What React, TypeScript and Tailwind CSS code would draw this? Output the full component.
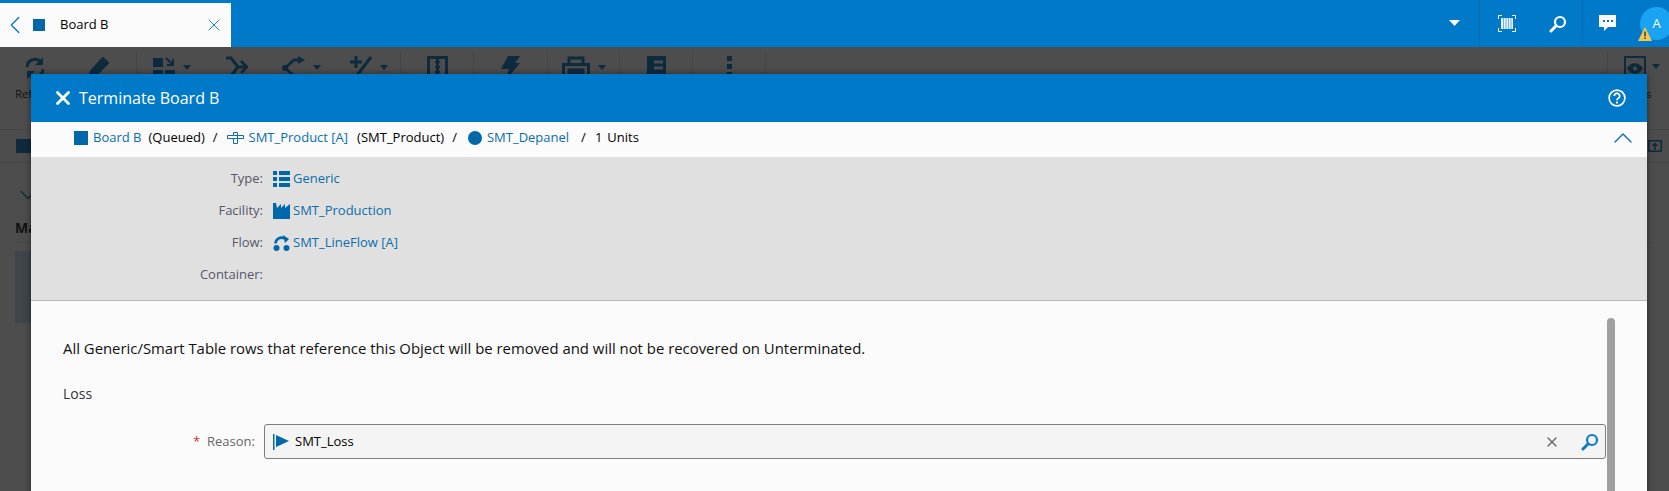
import type { ReactNode } from 'react'
import { ChevronLeft, ChevronUp, X } from 'lucide-react'

const linkCls = 'text-[#0a6eab]'
const INK = '#0e2a3d'

function SearchGlyph({ color, size }: { color: string; size: number }) {
  return (
    <svg width={size} height={size} viewBox="0 0 18 18" fill="none" stroke={color}>
      <circle cx="11" cy="7" r="5" strokeWidth="2.2" />
      <path d="M7.2 10.8 2 16" strokeWidth="3" strokeLinecap="round" />
    </svg>
  )
}

function Caret() {
  return (
    <svg width="8" height="5" viewBox="0 0 8 5" className="mb-[10px] ml-[8px]">
      <path d="M0 0h8L4 5z" fill={INK} />
    </svg>
  )
}

function ToolIcon({ w, children }: { w: number; children: ReactNode }) {
  return (
    <svg width={w} height="24" viewBox={`0 0 ${w} 24`} fill="none" stroke={INK} strokeWidth="3" className="shrink-0">
      {children}
    </svg>
  )
}

function Cell({ className, children }: { className: string; children: ReactNode }) {
  return <div className={`flex h-[64px] shrink-0 items-start border-r border-r-[#454545] ${className}`}>{children}</div>
}

function Toolbar() {
  return (
    <div className="flex h-[83px] items-start border-b border-b-[#454545] pt-[5px] text-[#111]">
      <Cell className="w-[137px] pt-[4px]">
        <div className="flex w-[70px] flex-col items-center">
          <ToolIcon w={18}>
            <path d="M1 11a8 8 0 0 1 14-5M17 13a8 8 0 0 1-14 5" />
            <path d="M17 1v8H9zM1 23v-8h8z" fill={INK} strokeWidth="0" />
          </ToolIcon>
          <span className="mt-[6px] text-[11px]">Refresh</span>
        </div>
        <div className="flex w-[58px] justify-center">
          <ToolIcon w={22}>
            <path d="M0 22l3-8L15 1l6 6L9 19z" fill={INK} strokeWidth="1" />
          </ToolIcon>
        </div>
      </Cell>
      <Cell className="w-[264px] gap-[35px] pl-[16px] pt-[4px]">
        <div className="flex items-end">
          <ToolIcon w={22}>
            <path d="M0 2h10v9H0zM0 14h10v10H0zM12 14h10v10H12z" fill={INK} strokeWidth="0" />
            <path d="M13 2l7 7M20 3v6h-6" strokeWidth="2" />
          </ToolIcon>
          <Caret />
        </div>
        <ToolIcon w={22}>
          <path d="M0 2h5l7 9h8M0 20h5l7-9" />
          <path d="M15 5l6 6-6 6" strokeWidth="2.500" />
        </ToolIcon>
        <div className="-ml-[1px] flex items-end">
          <ToolIcon w={23}>
            <path d="M3 12l9-8h6M3 12l9 8h6" />
            <circle cx="3" cy="12" r="3" fill={INK} strokeWidth="0" />
            <path d="M16 0l7 4-7 4z" fill={INK} strokeWidth="0" />
          </ToolIcon>
          <Caret />
        </div>
        <div className="-ml-[6px] flex items-end">
          <ToolIcon w={22}>
            <path d="M0 6h12M6 0v12M21 1L5 22M12 21h10" />
          </ToolIcon>
          <Caret />
        </div>
      </Cell>
      <Cell className="w-[73px] justify-center pt-[4px]">
        <ToolIcon w={21}>
          <path d="M1.500 1.500h18v21h-18zM10.500 1.500v21" />
          <path d="M8 6h5M8 11h5M8 16h5" strokeWidth="2" />
        </ToolIcon>
      </Cell>
      <Cell className="w-[74px] justify-center pt-[4px]">
        <ToolIcon w={19}>
          <path d="M7 0h12l-5 7h5L5 24l3-11H0z" fill={INK} strokeWidth="0" />
        </ToolIcon>
      </Cell>
      <Cell className="w-[72px] justify-center pt-[4px]">
        <div className="flex items-end">
          <ToolIcon w={28}>
            <path d="M7 7V2h14v5M1.500 8.500h25v13h-25zM7 14h14v3H7z" />
          </ToolIcon>
          <Caret />
        </div>
      </Cell>
      <Cell className="w-[73px] justify-center pt-[4px]">
        <ToolIcon w={19}>
          <path d="M0 0h19v24H0z" fill={INK} strokeWidth="0" />
          <path d="M7 6h9M7 12h9" stroke="#4d4d4d" strokeWidth="3" />
        </ToolIcon>
      </Cell>
      <Cell className="w-[73px] justify-center pt-[4px]">
        <ToolIcon w={5}>
          <path d="M0 0h5v5H0zM0 8h5v5H0zM0 16h5v5H0z" fill={INK} strokeWidth="0" />
        </ToolIcon>
      </Cell>
      <div className="ml-auto flex h-[64px] w-[62px] shrink-0 flex-col border-l border-l-[#454545] pr-[4px] pt-[4px]">
        <div className="flex justify-center pl-[10px]">
          <span className="flex h-[24px] w-[22px] items-center justify-center border-2 border-[#0e2a3d]">
            <svg width="16" height="11" viewBox="0 0 16 11">
              <path d="M0 5.500c4-7 12-7 16 0-4 7-12 7-16 0z" fill={INK} />
              <circle cx="8" cy="5.500" r="2" fill="#4d4d4d" />
            </svg>
          </span>
          <svg width="8" height="5" viewBox="0 0 8 5" className="ml-[6px] mt-[8px]">
            <path d="M0 0h8L4 5z" fill={INK} />
          </svg>
        </div>
        <span className="mt-[6px] text-center text-[11px]">Views</span>
      </div>
    </div>
  )
}

function DetailRow({ label, icon, value }: { label: string; icon?: ReactNode; value?: string }) {
  return (
    <div className="flex h-[32px] items-center">
      <span className="w-[232px] text-right text-[#56566a]">{label}</span>
      {value && (
        <span className="ml-[10px] flex items-center gap-[3px]">
          <span className="flex w-[17px] justify-center">{icon}</span>
          <span className={linkCls}>{value}</span>
        </span>
      )}
    </div>
  )
}

export default function App() {
  return (
    <div className="relative h-[491px] w-[1669px] overflow-hidden bg-[#4d4d4d] text-[13px] font-['Open_Sans',sans-serif]">
      {/* Top bar */}
      <div className="flex h-[47px] items-end bg-[#0079c9]">
        <div className="flex h-[44px] w-[231px] shrink-0 items-center bg-[#fbfbfb] pr-[7px]">
          <ChevronLeft size={30} strokeWidth={1.100} className="shrink-0 text-[#0079c9]" />
          <span className="ml-[3px] h-[12px] w-[12px] shrink-0 bg-[#0068a8]" />
          <span className="ml-[15px] flex-1 text-black">Board B</span>
          <X size={20} strokeWidth={1.100} className="text-[#0079c9]" />
        </div>
        <div className="flex h-[47px] flex-1 items-center justify-end">
          <svg width="12" height="8" viewBox="0 0 12 8" className="mr-[18px] -mt-[2px]"><path d="M0 1h11L5.500 7z" fill="#fff" /></svg>
          <div className="flex h-[47px] w-[103px] shrink-0 items-center gap-[33px] border-l border-l-[#0a6cad] pl-[18px]">
            <svg width="18" height="17" viewBox="0 0 18 17" fill="none" stroke="#fff">
              <path d="M.5 4V.5h3.500M14 .5h3.500V4M.5 13v3.500H4M14 16.500h3.500V13" strokeWidth="1" />
              <path d="M3 3h12v11H3z" fill="#e6f2fb" strokeWidth="0" />
              <path d="M5.500 3v11M8 3v11M10.500 3v11M13 3v11" stroke="#6fb1e0" strokeWidth="1" />
            </svg>
            <SearchGlyph color="#fff" size={18} />
          </div>
          <div className="flex h-[47px] w-[87px] shrink-0 items-center border-l border-l-[#0a6cad] pl-[16px]">
            <svg width="18" height="17" viewBox="0 0 18 17" className="shrink-0">
              <path d="M0 0h17v12H9l-4 4v-4H0z" fill="#fff" />
              <path d="M4 5h2v2H4zM8 5h2v2H8zM12 5h2v2h-2z" fill="#0079c9" />
            </svg>
            <div className="relative ml-[23px] flex h-[33px] w-[33px] shrink-0 items-center justify-center rounded-full bg-[#1aa3f2] text-[13px] text-white">
              A
              <svg width="14" height="14" viewBox="0 0 14 14" className="absolute -left-[2px] top-[20px]">
                <path d="M7 0l7 14H0z" fill="#f3c74b" />
                <path d="M6.300 4.500h1.400v5H6.300zM6.300 10.500h1.400V12H6.300z" fill="#333" />
              </svg>
            </div>
          </div>
        </div>
      </div>

      {/* Ribbon behind the dialog */}
      <Toolbar />

      {/* Page content behind the dialog */}
      <div className="flex h-[33px] items-center justify-between border-b border-b-[#454545] pl-[16px] pr-[7px]">
        <div className="h-[14px] w-[16px] bg-[#0e2a3d]" />
        <svg width="14" height="12" viewBox="0 0 14 12" fill="none" stroke={INK} strokeWidth="1.500">
          <path d="M.75.75h12.500v10.500H.75zM7 10V4M4.500 6 7 3.500 9.500 6" />
        </svg>
      </div>
      <div className="px-[15px]">
        <ChevronUp size={28} strokeWidth={1} className="-ml-[1px] mt-[18px] rotate-180 text-[#0e2a3d]" />
        <div className="mt-[8px] border-b border-b-[#454545] pb-[4px] text-[14px] font-bold text-[#111]">Ma</div>
        <div className="mt-[8px] h-[72px] w-[30px] bg-[#3f4548]" />
      </div>

      {/* Dialog */}
      <div className="absolute left-[31px] top-[74px] h-[440px] w-[1616px] bg-[#fbfbfb] shadow-[0_0_6px_rgba(0,0,0,0.5)]">
        <div className="flex h-[48px] items-center bg-[#0079c9] pl-[21px] pr-[21px] text-white">
          <X size={22} strokeWidth={3} />
          <span className="ml-[5px] text-[16px]">Terminate Board B</span>
          <svg width="18" height="18" viewBox="0 0 16 16" fill="none" className="ml-auto" stroke="#fff">
            <circle cx="8" cy="8" r="7" strokeWidth="1.500" />
            <path d="M5.600 6.200a2.400 2.400 0 1 1 3.600 2.100c-.8.5-1.200.9-1.200 1.700" strokeWidth="1.600" />
            <path d="M8 11.200v1.600" strokeWidth="1.600" />
          </svg>
        </div>

        <div className="flex h-[35px] items-center bg-[#fbfbfb] pb-[4px] pl-[43px] pr-[8px] text-black">
          <span className="h-[14px] w-[14px] shrink-0 bg-[#0068a8]" />
          <span className={`ml-[5px] ${linkCls}`}>Board B</span>
          <span className="ml-[7px]">(Queued)</span>
          <span className="ml-[8px]">/</span>
          <svg width="17" height="14" viewBox="0 0 17 14" fill="none" stroke="#0a6eab" className="ml-[9px]">
            <path d="M6.500 1.500h4v3h6v3h-6v5h-4v-5h-6v-3h6z" strokeWidth="1" />
            <path d="M6.500 4.500h4v3h-4" strokeWidth="1" />
          </svg>
          <span className={`ml-[5px] ${linkCls}`}>SMT_Product [A]</span>
          <span className="ml-[9px]">(SMT_Product)</span>
          <span className="ml-[8px]">/</span>
          <span className="ml-[11px] h-[14px] w-[14px] rounded-full bg-[#0068a8]" />
          <span className={`ml-[5px] ${linkCls}`}>SMT_Depanel</span>
          <span className="ml-[12px]">/</span>
          <span className="ml-[9px]">1</span>
          <span className="ml-[5px]">Units</span>
          <ChevronUp size={32} strokeWidth={1} className="ml-auto text-[#0a6eab]" />
        </div>

        <div className="h-[144px] border-b border-b-[#b8b8b8] bg-[#e0e0e0] pt-[6px]">
          <DetailRow
            label="Type:"
            value="Generic"
            icon={
              <svg width="17" height="16" viewBox="0 0 17 16" fill="#0068a8">
                <path d="M0 0h4v4H0zM6 0h11v4H6zM0 6h4v4H0zM6 6h11v4H6zM0 12h4v4H0zM6 12h11v4H6z" />
              </svg>
            }
          />
          <DetailRow
            label="Facility:"
            value="SMT_Production"
            icon={
              <svg width="17" height="16" viewBox="0 0 17 16" fill="#0068a8">
                <path d="M0 0h3l1 5 4-4v4l4-4v4l5-4v15H0z" />
              </svg>
            }
          />
          <DetailRow
            label="Flow:"
            value="SMT_LineFlow [A]"
            icon={
              <svg width="17" height="16" viewBox="0 0 17 16" fill="#0068a8">
                <circle cx="3.500" cy="13" r="3" />
                <circle cx="13.500" cy="13" r="3" />
                <path d="M2.500 8.500a6 6 0 0 1 9-5" fill="none" stroke="#0068a8" strokeWidth="2.500" />
                <path d="M10 0l6 4-4 4z" />
              </svg>
            }
          />
          <DetailRow label="Container:" />
        </div>

        <div className="relative pl-[32px] pr-[41px] pt-[38px] text-[14px] text-[#111]">
          <p className="text-[14.9px] leading-[19px]">All Generic/Smart Table rows that reference this Object will be removed and will not be recovered on Unterminated.</p>
          <p className="mt-[26px] leading-[19px] text-[#333]">Loss</p>
          <div className="mt-[21px] flex items-center">
            <div className="w-[192px] text-right text-[13px] text-[#666]">
              <span className="mr-[7px] text-[#c0392b]">*</span>Reason:
            </div>
            <div className="ml-[9px] flex h-[35px] flex-1 items-center rounded-[3px] border border-[#7d7d7d] bg-[#f4f4f4] pl-[8px] pr-[6px]">
              <svg width="17" height="16" viewBox="0 0 17 16" fill="#0068a8">
                <path d="M0 0h1.500v16H0zM3 1l13 6-13 6z" />
              </svg>
              <span className="ml-[5px] flex-1 text-[13px] text-black">SMT_Loss</span>
              <X size={16} strokeWidth={2} className="mr-[21px] text-[#6b6b6b]" />
              <SearchGlyph color="#0a7cc4" size={18} />
            </div>
          </div>
          <div className="absolute right-[32px] top-[17px] h-[300px] w-[8px] rounded-t-[4px] bg-[#a0a0a0]" />
        </div>
      </div>
    </div>
  )
}
